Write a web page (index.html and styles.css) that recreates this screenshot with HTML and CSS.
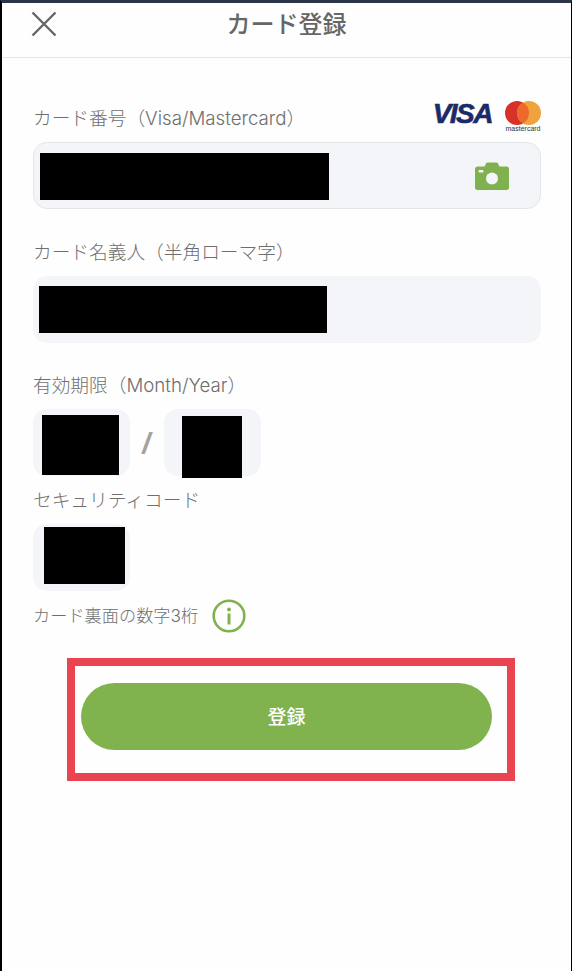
FILE: index.html
```html
<!DOCTYPE html>
<html lang="ja">
<head>
<meta charset="utf-8">
<title>カード登録</title>
<link rel="stylesheet" href="styles.css">
</head>
<body>
<div class="frame">
  <header class="head">
    <svg class="close" viewBox="0 0 26 26" width="26" height="26"><path d="M1.500 1.500 24.500 24.500M24.500 1.500 1.500 24.500" fill="none" stroke="#666" stroke-width="2.400"/></svg>
    <h1 class="title">カード登録</h1>
  </header>
  <main class="form">
    <div class="label-row">
      <span class="label">カード番号（Visa/Mastercard）</span>
      <div class="brands">
        <span class="visa">VISA</span>
        <div class="mc">
          <svg viewBox="0 0 36 24" width="36" height="24"><circle cx="12" cy="12" r="12" fill="#d8312a"/><circle cx="24" cy="12" r="12" fill="#f0a23c"/><path d="M18 1.600a12 12 0 0 1 0 20.800a12 12 0 0 1 0-20.800z" fill="#ee6a2c"/></svg>
          <span class="mc-text">mastercard</span>
        </div>
      </div>
    </div>
    <div class="field bordered">
      <div class="mask m1"></div>
      <svg class="camera" viewBox="0 0 34 28" width="34" height="28"><path d="M3 4.500H9.500L11 1.500Q11.400 .5 12.500 .5H21.500Q22.600 .5 23 1.500L24.500 4.500H31.500Q34 4.500 34 7V25.500Q34 28 31.500 28H2.500Q0 28 0 25.500V7Q0 4.500 3 4.500Z" fill="#7fb24e"/><circle cx="17" cy="16.500" r="6" fill="#f4f5f9"/><rect x="3.500" y="8" width="5" height="2.500" rx="1" fill="#f4f5f9"/></svg>
    </div>

    <div class="label-row second"><span class="label">カード名義人（半角ローマ字）</span></div>
    <div class="field">
      <div class="mask m2"></div>
    </div>

    <div class="label-row third"><span class="label">有効期限（Month/Year）</span></div>
    <div class="expiry">
      <div class="field small"><div class="mask m3"></div></div>
      <span class="slash">/</span>
      <div class="field small"><div class="mask m4"></div></div>
    </div>

    <div class="label-row fourth"><span class="label">セキュリティコード</span></div>
    <div class="field small"><div class="mask m5"></div></div>

    <div class="note">
      <span class="note-text">カード裏面の数字3桁</span>
      <svg class="info" viewBox="0 0 34 34" width="34" height="34"><circle cx="17" cy="17" r="15.300" fill="none" stroke="#7fb24e" stroke-width="2.600"/><circle cx="17" cy="10.500" r="1.900" fill="#7fb24e"/><rect x="15.500" y="14.500" width="3" height="11" fill="#7fb24e"/></svg>
    </div>

    <div class="callout">
      <button class="submit" type="button">登録</button>
    </div>
  </main>
</div>
</body>
</html>
```

FILE: styles.css
```css
* { box-sizing: border-box; }
html, body { margin: 0; padding: 0; background: #fff; }
body { font-family: "Inter", "Noto Sans CJK JP", "Noto Sans", sans-serif; }

.frame {
  width: 572px;
  height: 971px;
  overflow: hidden;
  background: #fefefe;
  border-top: 3px solid #2b3549;
  border-left: 2px solid #000;
  border-right: 1px solid #000;
}

.head {
  position: relative;
  height: 55px;
  border-bottom: 1px solid #e6e6e8;
  display: flex;
  align-items: center;
  justify-content: center;
}
.close { position: absolute; left: 29px; top: 8px; }
.title {
  margin: 0 0 10px;
  font-size: 24px;
  line-height: 32px;
  font-weight: 500;
  color: #666;
}

.form { padding: 47px 30px 0 31px; }

.label-row {
  height: 24px;
  display: flex;
  justify-content: space-between;
  align-items: center;
  margin-bottom: 13px;
}
.label-row.second { margin-top: 30px; }
.label-row.third { margin-top: 29px; }
.label-row.fourth { margin-top: 11px; }
.label {
  margin-top: 4px;
  font-size: 18.700px;
  line-height: 24px;
  font-weight: 300;
  color: #6e6e6e;
}

.brands { display: flex; align-items: flex-start; gap: 13px; }
.visa {
  font-family: "Liberation Sans", sans-serif;
  font-size: 28px;
  line-height: 26px;
  font-weight: 700;
  font-style: italic;
  letter-spacing: -1.500px;
  color: #1c2a68;
  -webkit-text-stroke: .6px #1c2a68;
}
.mc { width: 36px; display: flex; flex-direction: column; align-items: center; }
.mc svg { display: block; }
.mc-text {
  font-family: "Liberation Sans", sans-serif;
  font-size: 7px;
  line-height: 8px;
  color: #333;
  white-space: nowrap;
}

.field {
  position: relative;
  height: 67px;
  border-radius: 14px;
  background: #f4f5f9;
}
.field.bordered { border: 1px solid #e4e5ea; }
.field.small { width: 97px; }

.mask { position: absolute; background: #000; }
.m1 { left: 6px; top: 10px; width: 289px; height: 47px; }
.m2 { left: 6px; top: 10px; width: 288px; height: 47px; }
.m3 { left: 9px; top: 6px; width: 77px; height: 60px; }
.m4 { left: 18px; top: 7px; width: 60px; height: 62px; }
.m5 { left: 11px; top: 3px; width: 81px; height: 57px; }

.camera { position: absolute; right: 31px; top: 19px; }

.expiry { display: flex; align-items: center; }
.slash {
  width: 34px;
  text-align: center;
  font-size: 30px;
  line-height: 34px;
  font-weight: 600;
  color: #a2a2a2;
  font-family: "Noto Sans", sans-serif;
}

.note { display: flex; align-items: center; gap: 14px; margin-top: 8px; height: 34px; }
.note-text { font-size: 17.200px; line-height: 24px; color: #6e6e6e; font-weight: 300; }

.callout {
  width: 448px;
  height: 123px;
  margin: 25px 0 0 34px;
  padding: 17px 0 0 6px;
  border: 8px solid #ea4450;
  background: #fefefe;
}
.submit {
  display: block;
  width: 411px;
  height: 67px;
  border: 0;
  padding: 0 0 2px;
  border-radius: 34px;
  background: #80b34e;
  color: #fff;
  font-family: inherit;
  font-size: 19px;
  font-weight: 500;
}
```
